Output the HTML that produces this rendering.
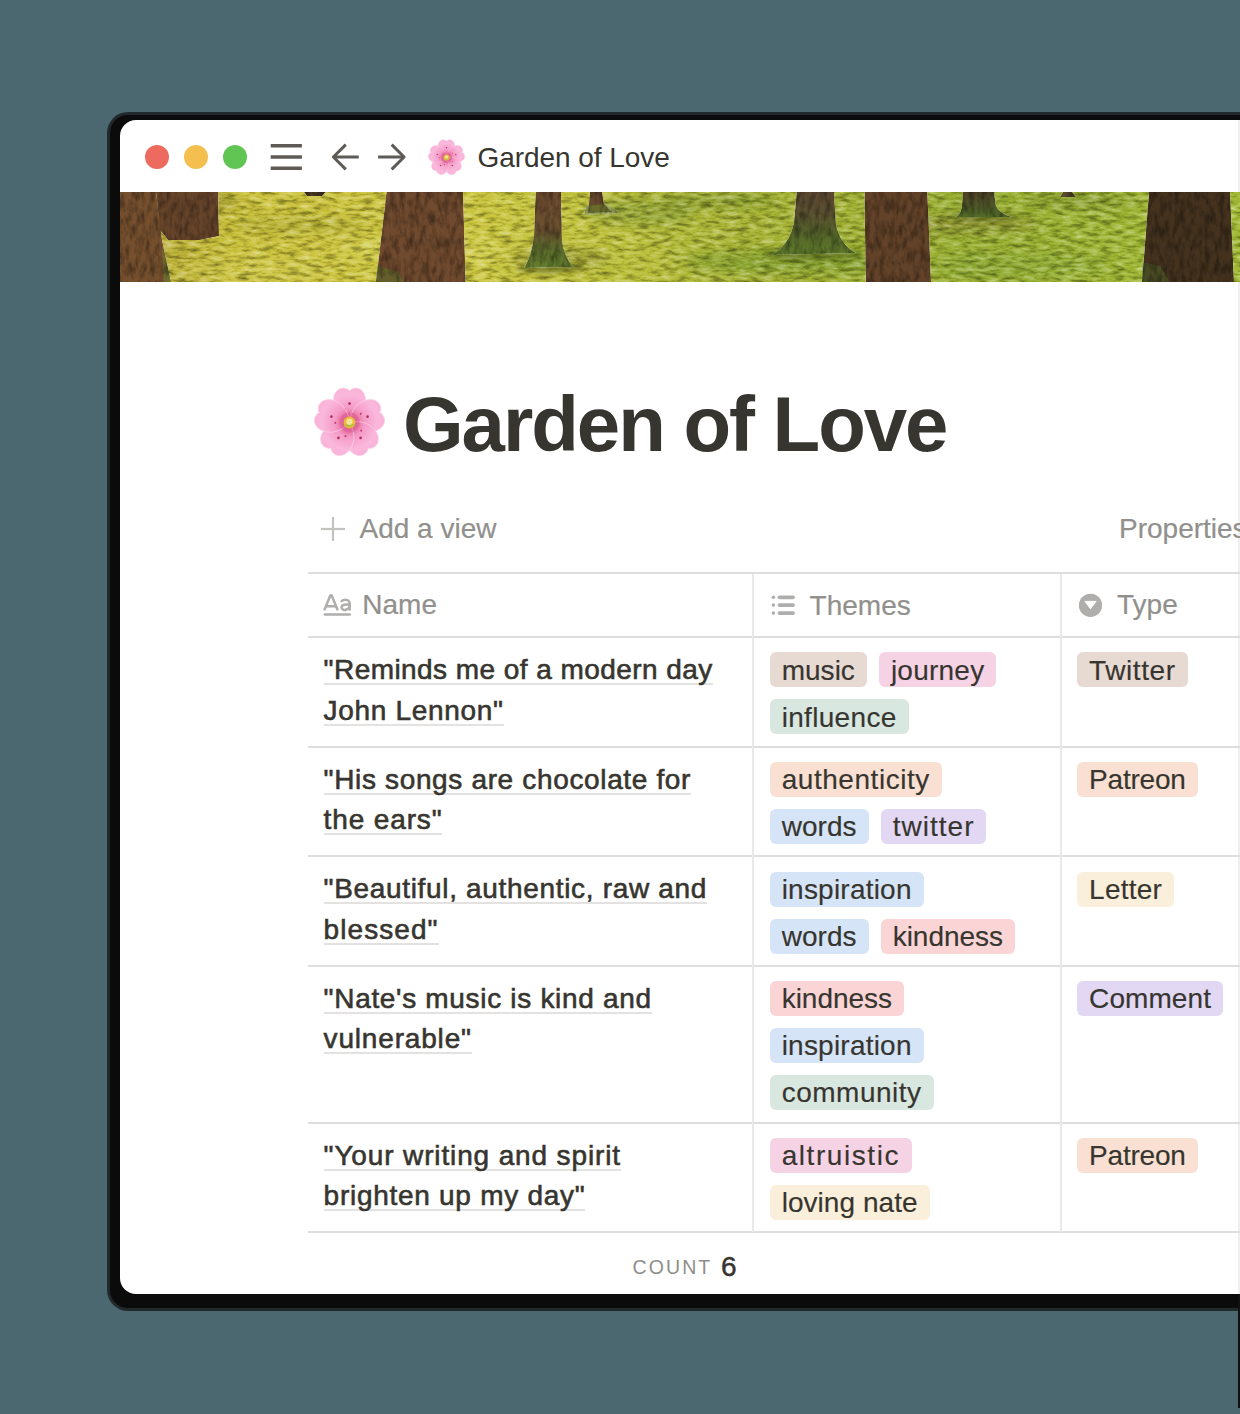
<!DOCTYPE html>
<html><head><meta charset="utf-8"><style>
*{box-sizing:border-box;margin:0;padding:0}
html,body{width:1240px;height:1414px;overflow:hidden;background:#4b676f;font-family:"Liberation Sans",sans-serif;color:#37352f}
.a{position:absolute}
#shadow{left:110px;top:114.5px;width:1300px;height:1193px;background:#0b0b0b;border-radius:18px;box-shadow:0 0 0 3px rgba(18,18,18,0.72)}
#win{left:120px;top:120px;width:1120px;height:1174px;background:#fff;border-radius:16px 0 0 16px;overflow:hidden}
.dot{width:24px;height:24px;border-radius:50%;top:25px}
.t{white-space:nowrap;line-height:1}
.hl{background:#dfdedc}
.vl{background:#e8e9e8}
.gray{color:#91908c;-webkit-text-stroke:0.2px #91908c}
.cell{font-size:28px;color:#37352f;-webkit-text-stroke:0.6px #37352f}
.ul{position:absolute;left:0;right:0;top:27px;height:2px;background:#e3e2e0}
.trow{display:flex;gap:12px}
.tag{display:block;height:35px;border-radius:6px;font-size:28px;line-height:35px;padding:0.5px 0 0 12px;white-space:nowrap;color:#37352f;-webkit-text-stroke:0.15px #37352f}
</style></head><body><svg width="0" height="0" style="position:absolute"><defs>
<radialGradient id="pg" gradientUnits="userSpaceOnUse" cx="50" cy="50" r="50"><stop offset="0" stop-color="#d24a84"/><stop offset="0.2" stop-color="#e8709f"/><stop offset="0.38" stop-color="#f59cc8"/><stop offset="0.7" stop-color="#fab8dc"/><stop offset="1" stop-color="#f8aed5"/></radialGradient>
<g id="petal"><path d="M50 50 C40 46 29 36 29.5 22 C30 12 36 6 43 6.5 C46.5 7 49 8 50 10 C51 8 53.5 7 57 6.5 C64 6 70 12 70.5 22 C71 36 60 46 50 50 Z" fill="url(#pg)" stroke="#fccde6" stroke-width="0.9"/><circle cx="50" cy="26" r="1.7" fill="#b02e60"/><circle cx="44" cy="33" r="1.3" fill="#b02e60" opacity="0.8"/></g>
<g id="flower"><use href="#petal"/><use href="#petal" transform="rotate(72 50 50)"/><use href="#petal" transform="rotate(144 50 50)"/><use href="#petal" transform="rotate(216 50 50)"/><use href="#petal" transform="rotate(288 50 50)"/><circle cx="50" cy="50" r="13" fill="#d85a92" opacity="0.45"/><circle cx="50" cy="50" r="7.5" fill="#f0b838"/><path d="M43.5 52 A7.5 7.5 0 0 0 56.5 52 Z" fill="#a8c040" opacity="0.8"/><circle cx="50" cy="49" r="4" fill="#f2e69a"/></g>
</defs></svg>
<div id="shadow" class="a"></div>
<div class="a" style="left:1238px;top:1290px;width:2px;height:118px;background:#111"></div>
<div id="win" class="a">
<div class="a" style="left:1118px;top:0;width:2px;height:1174px;background:#efefef"></div>
<div class="a dot" style="left:25px;background:#ed6a5e"></div>
<div class="a dot" style="left:64px;background:#f4bf4f"></div>
<div class="a dot" style="left:103px;background:#61c554"></div>
<svg class="a" style="left:148px;top:20px" width="36" height="34" viewBox="0 0 36 34"><g stroke="#5e5b57" stroke-width="3.6"><line x1="2.7" y1="5.7" x2="33.9" y2="5.7"/><line x1="2.7" y1="17" x2="33.9" y2="17"/><line x1="2.7" y1="28.3" x2="33.9" y2="28.3"/></g></svg>
<svg class="a" style="left:200px;top:15px" width="100" height="44" viewBox="0 0 100 44"><g stroke="#5e5b57" stroke-width="3" fill="none" stroke-linejoin="round"><path d="M38.8 22 H14"/><path d="M25.8 9.6 L13.4 22 L25.8 34.4"/><path d="M58.1 22 H83"/><path d="M71.7 9.6 L84.1 22 L71.7 34.4"/></g></svg>
<svg class="a" style="left:306px;top:17px" width="41" height="41" viewBox="0 0 100 100"><use href="#flower"/></svg>
<div class="a t" style="left:357.5px;top:23.5px;font-size:28px;letter-spacing:-0.05px;color:#37352f">Garden of Love</div>
<svg class="a" style="left:0;top:72px" width="1120" height="90" viewBox="120 192 1120 90" preserveAspectRatio="none">
<defs>
<linearGradient id="moss" x1="0" y1="0" x2="1" y2="0">
<stop offset="0" stop-color="#aea232"/>
<stop offset="0.1" stop-color="#c9c03a"/>
<stop offset="0.3" stop-color="#ccc63e"/>
<stop offset="0.45" stop-color="#bcc03a"/>
<stop offset="0.55" stop-color="#a8b434"/>
<stop offset="0.75" stop-color="#98ae30"/>
<stop offset="1" stop-color="#a2ba34"/>
</linearGradient>
<linearGradient id="tF" x1="0" y1="0" x2="0" y2="1"><stop offset="0" stop-color="#5a4630"/><stop offset="0.35" stop-color="#5a5030"/><stop offset="0.7" stop-color="#56682a"/><stop offset="1" stop-color="#5e7a2a"/></linearGradient>
<linearGradient id="tD" x1="0" y1="0" x2="0" y2="1"><stop offset="0" stop-color="#6c4a2e"/><stop offset="0.5" stop-color="#6a5030"/><stop offset="0.75" stop-color="#5a6a2c"/><stop offset="1" stop-color="#66802e"/></linearGradient>
<linearGradient id="tH" x1="0" y1="0" x2="0" y2="1"><stop offset="0" stop-color="#4e4028"/><stop offset="1" stop-color="#506a28"/></linearGradient>
<filter id="blur6" x="-50%" y="-50%" width="200%" height="200%"><feGaussianBlur stdDeviation="6"/></filter>
<filter id="blur3" x="-50%" y="-50%" width="200%" height="200%"><feGaussianBlur stdDeviation="2.5"/></filter>
<filter id="moss-f" x="0" y="0" width="100%" height="100%" color-interpolation-filters="sRGB">
<feTurbulence type="fractalNoise" baseFrequency="0.08 0.25" numOctaves="4" seed="7" result="n"/>
<feColorMatrix in="n" type="matrix" values="0.55 0 0 0 0.22  0.55 0 0 0 0.22  0.55 0 0 0 0.22  0 0 0 0 1" result="g"/>
<feBlend in="SourceGraphic" in2="g" mode="overlay" result="m"/>
<feComposite in="m" in2="SourceAlpha" operator="in"/>
</filter>
<filter id="bark-f" x="0" y="0" width="100%" height="100%" color-interpolation-filters="sRGB">
<feTurbulence type="fractalNoise" baseFrequency="0.2 0.08" numOctaves="3" seed="11" result="n"/>
<feColorMatrix in="n" type="matrix" values="0.8 0 0 0 0.5  0.8 0 0 0 0.5  0.8 0 0 0 0.5  0 0 0 0 1" result="g"/>
<feBlend in="SourceGraphic" in2="g" mode="multiply" result="m"/>
<feComposite in="m" in2="SourceAlpha" operator="in"/>
</filter>
</defs>
<g filter="url(#moss-f)">
<rect x="120" y="192" width="1120" height="90" fill="url(#moss)"/>
<g filter="url(#blur6)">
<ellipse cx="180" cy="200" rx="60" ry="10" fill="#6e6a26" opacity="0.45"/>
<ellipse cx="300" cy="225" rx="70" ry="6" fill="#8a8a2c" opacity="0.35"/>
<ellipse cx="560" cy="258" rx="50" ry="10" fill="#6e6e28" opacity="0.4"/>
<ellipse cx="640" cy="212" rx="55" ry="14" fill="#6e8a2a" opacity="0.45"/>
<ellipse cx="720" cy="200" rx="60" ry="8" fill="#6a8428" opacity="0.4"/>
<ellipse cx="790" cy="262" rx="110" ry="12" fill="#5e8a26" opacity="0.4"/>
<ellipse cx="960" cy="224" rx="80" ry="8" fill="#7a6a30" opacity="0.35"/>
<ellipse cx="1080" cy="200" rx="60" ry="8" fill="#6a7a2a" opacity="0.35"/>
<ellipse cx="1020" cy="265" rx="90" ry="12" fill="#7aa034" opacity="0.3"/>
<ellipse cx="420" cy="250" rx="90" ry="14" fill="#d8d45a" opacity="0.35"/>
<ellipse cx="250" cy="268" rx="80" ry="10" fill="#d4d058" opacity="0.3"/>
</g>
</g>
<g filter="url(#blur3)" opacity="0.5"><ellipse cx="550" cy="268" rx="34" ry="5" fill="#4a5018"/><ellipse cx="812" cy="254" rx="50" ry="6" fill="#4a5a18"/><ellipse cx="985" cy="217" rx="35" ry="4" fill="#4a5018"/></g>
<g filter="url(#bark-f)">
<path d="M156 192 L218 192 L219 236 L200 240 L168 240 L160 230 Z" fill="#66442a"/>
<path d="M120 192 L156 192 L162 240 L171 282 L120 282 Z" fill="#76502e"/>
<path d="M162 245 L171 282 L164 282 Z" fill="#6a7a30" opacity="0.7"/>
<path d="M304 192 L326 192 L322 196 L307 196 Z" fill="#4a3a24"/>
<path d="M386.5 192 L463 192 L465.6 282 L376 282 Z" fill="#704a2e"/>
<path d="M377 265 L398 272 L404 282 L376 282 Z" fill="#5a6a2a" opacity="0.6"/>
<path d="M535.7 192 L561 192 L562 240 Q564 258 574 267 L524 268 Q532 255 534 235 Z" fill="url(#tD)"/>

<path d="M590 192 L602 192 L604 204 L612 212 L588 213 Z" fill="#66482c"/><path d="M586 206 L606 204 L620 213 L584 215 Z" fill="#6a7a2c" opacity="0.7"/>
<path d="M796.7 192 L834 192 L836 225 Q840 244 856 253 L772 255 Q790 244 794 222 Z" fill="url(#tF)"/>

<path d="M864.5 192 L927.4 192 L931 282 L865.7 282 Z" fill="#624228"/>
<path d="M963 192 L994 192 L996 206 Q1000 214 1012 217 L956 217 Q962 212 962 205 Z" fill="url(#tH)"/>

<path d="M1063 192 L1072 192 L1076 197 L1060 197 Z" fill="#5a4a2c"/>
<path d="M1149 192 L1230 192 L1234 282 L1142 282 Z" fill="#44321e"/>
<path d="M1142 262 L1160 266 L1170 282 L1142 282 Z" fill="#4e6428" opacity="0.5"/>
</g>
</svg>

<svg class="a" style="left:189.7px;top:263.1px" width="79" height="79" viewBox="0 0 100 100"><use href="#flower"/></svg>
<div class="a t" style="left:283px;top:264.6px;font-size:78px;font-weight:700;letter-spacing:-2.05px;color:#37352f">Garden of Love</div>
<svg class="a" style="left:200px;top:396px" width="26" height="26" viewBox="0 0 26 26"><g stroke="#c4c3c0" stroke-width="2.2"><line x1="13" y1="1" x2="13" y2="25"/><line x1="1" y1="13" x2="25" y2="13"/></g></svg>
<div class="a t gray" style="left:239.5px;top:395px;font-size:28px">Add a view</div>
<div class="a t gray" style="left:999px;top:395px;font-size:28px">Properties</div>
<div class="a hl" style="left:188px;top:452.0px;width:1000px;height:2px"></div>
<div class="a hl" style="left:188px;top:516.0px;width:1000px;height:2px"></div>
<div class="a hl" style="left:188px;top:625.6px;width:1000px;height:2px"></div>
<div class="a hl" style="left:188px;top:735.3px;width:1000px;height:2px"></div>
<div class="a hl" style="left:188px;top:844.7px;width:1000px;height:2px"></div>
<div class="a hl" style="left:188px;top:1001.6px;width:1000px;height:2px"></div>
<div class="a hl" style="left:188px;top:1111.0px;width:1000px;height:2px"></div>
<div class="a vl" style="left:632px;top:454px;width:2px;height:658px"></div>
<div class="a vl" style="left:939.5px;top:454px;width:2px;height:658px"></div>
<svg class="a" style="left:198px;top:468px" width="40" height="32" viewBox="318 588 40 32"><g stroke="#afaeac" stroke-width="2.5" fill="none" stroke-linecap="round" stroke-linejoin="round"><path d="M324.6 609.4 L330.2 595.8 Q331 594.6 331.8 595.8 L337.4 609.4"/><path d="M326.6 606.3 H335.3"/><path d="M341.6 601.2 C343.5 599.2 347.8 599.0 349.2 601.6 C349.8 602.8 349.7 604 349.7 605 V609.6"/><path d="M349.5 604.6 C346 604.2 341.8 604.6 341.6 607.2 C341.5 609.6 344.2 610.2 345.8 609.8 C348 609.2 349.5 607.8 349.6 606"/><path d="M324.8 614.5 H349.8"/></g></svg>
<div class="a t gray" style="left:242.3px;top:471.1px;font-size:28px">Name</div>
<svg class="a" style="left:650px;top:474px" width="28" height="22" viewBox="0 0 28 22"><g fill="#afaeac"><circle cx="3.4" cy="3.3" r="1.8"/><circle cx="3.4" cy="11.1" r="1.8"/><circle cx="3.4" cy="19.1" r="1.8"/><rect x="7.6" y="1.4" width="17.3" height="3.8" rx="1.9"/><rect x="7.6" y="9.2" width="17.3" height="3.8" rx="1.9"/><rect x="7.6" y="17.2" width="17.3" height="3.8" rx="1.9"/></g></svg>
<div class="a t gray" style="left:689.6px;top:471.5px;font-size:28px">Themes</div>
<svg class="a" style="left:958px;top:473px" width="25" height="25" viewBox="0 0 25 25"><circle cx="12.5" cy="12.3" r="11.6" fill="#afaeac"/><path d="M6.9 8.4 H18.1 L12.5 15.8 Z" fill="#fff" stroke="#fff" stroke-width="1" stroke-linejoin="round"/></svg>
<div class="a t gray" style="left:997px;top:470.9px;font-size:28px">Type</div>
<div class="a t cell" style="left:203.6px;top:536.1px;letter-spacing:0.443px"><div class="ul"></div><span style="position:relative">"Reminds me of a modern day</span></div>
<div class="a t cell" style="left:203.6px;top:576.7px;letter-spacing:0.685px"><div class="ul"></div><span style="position:relative">John Lennon"</span></div>
<div class="a trow" style="left:649.7px;top:532.2px"><span class="tag" style="width:97.2px;letter-spacing:0.015px;background:#e7dad3">music</span><span class="tag" style="width:117.5px;letter-spacing:0.237px;background:#f6d3e4">journey</span></div>
<div class="a trow" style="left:649.7px;top:579.2px"><span class="tag" style="width:138.9px;letter-spacing:0.312px;background:#d9e7e1">influence</span></div>
<div class="a trow" style="left:957.1px;top:532.2px"><span class="tag" style="width:110.6px;letter-spacing:0.59px;background:#e7dad3">Twitter</span></div>
<div class="a t cell" style="left:203.6px;top:645.7px;letter-spacing:0.652px"><div class="ul"></div><span style="position:relative">"His songs are chocolate for</span></div>
<div class="a t cell" style="left:203.6px;top:686.3px;letter-spacing:0.864px"><div class="ul"></div><span style="position:relative">the ears"</span></div>
<div class="a trow" style="left:649.7px;top:641.8px"><span class="tag" style="width:172.2px;letter-spacing:0.547px;background:#fae0d2">authenticity</span></div>
<div class="a trow" style="left:649.7px;top:688.8px"><span class="tag" style="width:99px;letter-spacing:0.059px;background:#d5e4f6">words</span><span class="tag" style="width:105.8px;letter-spacing:1.016px;background:#e2d8f4">twitter</span></div>
<div class="a trow" style="left:957.1px;top:641.8px"><span class="tag" style="width:120.5px;letter-spacing:-0.225px;background:#fae0d2">Patreon</span></div>
<div class="a t cell" style="left:203.6px;top:755.4px;letter-spacing:0.671px"><div class="ul"></div><span style="position:relative">"Beautiful, authentic, raw and</span></div>
<div class="a t cell" style="left:203.6px;top:796.0px;letter-spacing:1.068px"><div class="ul"></div><span style="position:relative">blessed"</span></div>
<div class="a trow" style="left:649.7px;top:751.5px"><span class="tag" style="width:154px;letter-spacing:0.214px;background:#d5e4f6">inspiration</span></div>
<div class="a trow" style="left:649.7px;top:798.5px"><span class="tag" style="width:99px;letter-spacing:0.059px;background:#d5e4f6">words</span><span class="tag" style="width:134.3px;letter-spacing:-0.027px;background:#fbd5d5">kindness</span></div>
<div class="a trow" style="left:957.1px;top:751.5px"><span class="tag" style="width:96.9px;letter-spacing:0.215px;background:#faefda">Letter</span></div>
<div class="a t cell" style="left:203.6px;top:864.8px;letter-spacing:0.689px"><div class="ul"></div><span style="position:relative">"Nate&#39;s music is kind and</span></div>
<div class="a t cell" style="left:203.6px;top:905.4px;letter-spacing:0.824px"><div class="ul"></div><span style="position:relative">vulnerable"</span></div>
<div class="a trow" style="left:649.7px;top:860.9px"><span class="tag" style="width:134.3px;letter-spacing:-0.027px;background:#fbd5d5">kindness</span></div>
<div class="a trow" style="left:649.7px;top:907.9px"><span class="tag" style="width:154px;letter-spacing:0.214px;background:#d5e4f6">inspiration</span></div>
<div class="a trow" style="left:649.7px;top:954.9px"><span class="tag" style="width:163.9px;letter-spacing:0.503px;background:#d9e7e1">community</span></div>
<div class="a trow" style="left:957.1px;top:860.9px"><span class="tag" style="width:145.9px;letter-spacing:0.075px;background:#e2d8f4">Comment</span></div>
<div class="a t cell" style="left:203.6px;top:1021.7px;letter-spacing:0.862px"><div class="ul"></div><span style="position:relative">"Your writing and spirit</span></div>
<div class="a t cell" style="left:203.6px;top:1062.3px;letter-spacing:0.722px"><div class="ul"></div><span style="position:relative">brighten up my day"</span></div>
<div class="a trow" style="left:649.7px;top:1017.8px"><span class="tag" style="width:142.4px;letter-spacing:1.57px;background:#f6d3e4">altruistic</span></div>
<div class="a trow" style="left:649.7px;top:1064.8px"><span class="tag" style="width:159.9px;letter-spacing:0.042px;background:#faefda">loving nate</span></div>
<div class="a trow" style="left:957.1px;top:1017.8px"><span class="tag" style="width:120.5px;letter-spacing:-0.225px;background:#fae0d2">Patreon</span></div>
<div class="a t" style="left:512.5px;top:1137.8px;font-size:19.5px;letter-spacing:2.1px;color:#8f8e8a">COUNT</div>
<div class="a t" style="left:601px;top:1133px;font-size:28px;color:#37352f;-webkit-text-stroke:0.5px #37352f">6</div>
</div>
</body></html>
